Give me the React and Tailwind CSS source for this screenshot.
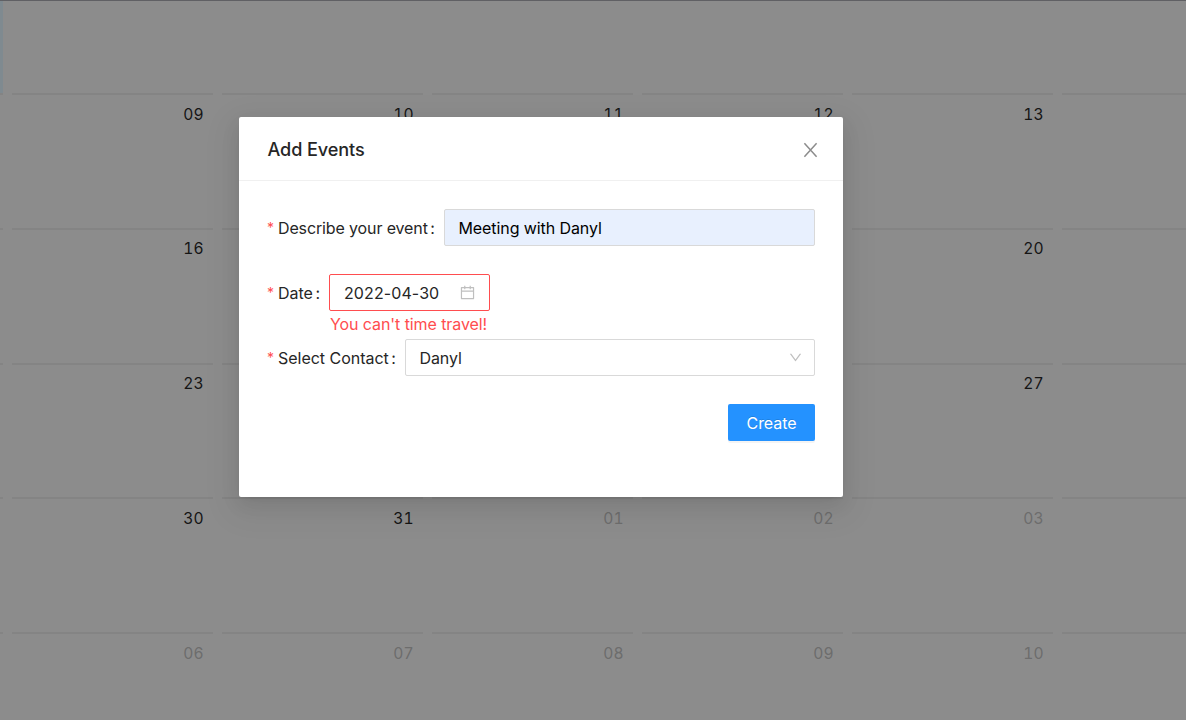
import React from "react";
import { AiOutlineCalendar, AiOutlineDown } from "react-icons/ai";

// The outer columns are only partly in view, so their labels stay empty.
const weeks = [
  ["", "09", "10", "11", "12", "13", ""],
  ["", "16", "17", "18", "19", "20", ""],
  ["", "23", "24", "25", "26", "27", ""],
  ["", "30", "31", "01", "02", "03", ""],
  ["", "06", "07", "08", "09", "10", ""],
];

function Day({ label, muted }) {
  return (
    <div className="h-[134.75px] border-t-2 border-[#848484] pt-[6.6px] pr-[9.5px] text-right">
      <span className={muted ? "text-[#6d6d6d]" : "text-[#151515]"}>{label}</span>
    </div>
  );
}

function Calendar() {
  return (
    <div className="h-full overflow-hidden border-t border-[#606064] bg-[#8c8c8c]">
      <div className="-ml-[198px] grid w-[1461px] grid-cols-[repeat(7,201px)] gap-x-[9px] text-[15.6px] leading-[26px] tabular-nums">
        <div className="h-[92px] bg-[#7f8a90]" />
        <div className="col-span-6" />
        {weeks.map((week, w) =>
          week.map((day, d) => (
            <Day key={w + "-" + d} label={day} muted={w === 4 || (w === 3 && d > 2)} />
          ))
        )}
      </div>
    </div>
  );
}

function Label({ children, className }) {
  return (
    <label className={"flex h-[37px] shrink-0 items-center whitespace-nowrap " + className}>
      <span className="mr-[5px] w-[6px] text-[14px] leading-none text-[#ff4d4f]">*</span>
      <span>{children}</span>
      <span className="ml-[2.5px]">:</span>
    </label>
  );
}

function EventDialog() {
  return (
    <section className="h-[380px] w-[604px] rounded-[2px] bg-white shadow-[0_3px_7px_-5px_rgba(0,0,0,0.12),0_7px_19px_0_rgba(0,0,0,0.08),0_10px_33px_9px_rgba(0,0,0,0.05)]">
      <header className="flex h-16 items-center justify-between border-b border-[#f0f0f0] pt-[2px] pr-[25px] pl-[28.5px]">
        <h1 className="text-[18.1px] font-medium tracking-[-0.1px]">Add Events</h1>
        <svg viewBox="0 0 15 16" className="h-4 w-[15px] text-[#8c8c8c]" fill="none" stroke="currentColor" strokeWidth="1.5">
          <path d="M1.4 1.2 13.6 14.8M13.6 1.2 1.4 14.8" />
        </svg>
      </header>
      <form className="px-7 pt-7 text-[16px] leading-[26px]">
        <div className="flex">
          <Label className="w-[177px] tracking-[-0.13px]">Describe your event</Label>
          <div className="flex h-[37px] flex-1 items-center rounded-[2px] border border-[#d9d9d9] bg-[#e8f0fe] px-[13.5px] tracking-[-0.09px] text-black">
            Meeting with Danyl
          </div>
        </div>
        <div className="mt-7 flex h-[65px]">
          <Label className="w-[62px]">Date</Label>
          <div>
            <div className="flex h-[37px] w-[161px] items-center justify-between rounded-[2px] border border-[#ff4d4f] pr-[13px] pl-[14px]">
              <span className="tracking-[0.1px]">2022-04-30</span>
              <AiOutlineCalendar className="size-[17px] text-[#bfbfbf]" />
            </div>
            <p className="pl-px tracking-[-0.08px] text-[#ff4d4f]">You can't time travel!</p>
          </div>
        </div>
        <div className="flex">
          <Label className="w-[138px] tracking-[-0.02px]">Select Contact</Label>
          <div className="flex h-[37px] flex-1 items-center justify-between rounded-[2px] border border-[#d9d9d9] pr-[11px] pl-[13.5px]">
            <span className="tracking-[-0.1px]">Danyl</span>
            <AiOutlineDown className="size-[15px] text-[#bfbfbf]" />
          </div>
        </div>
        <div className="mt-7 flex justify-end">
          <button
            type="button"
            className="h-[37px] w-[87px] rounded-[2px] bg-[#2492ff] tracking-[-0.08px] text-white shadow-[0_2px_0_rgba(0,0,0,0.045)] [text-shadow:0_-1px_0_rgba(0,0,0,0.12)]"
          >
            Create
          </button>
        </div>
      </form>
    </section>
  );
}

export default function App() {
  return (
    <main className="relative h-screen overflow-hidden font-[Inter,sans-serif] text-[#262626]">
      <Calendar />
      <div className="absolute top-[117px] left-[239px]">
        <EventDialog />
      </div>
    </main>
  );
}
